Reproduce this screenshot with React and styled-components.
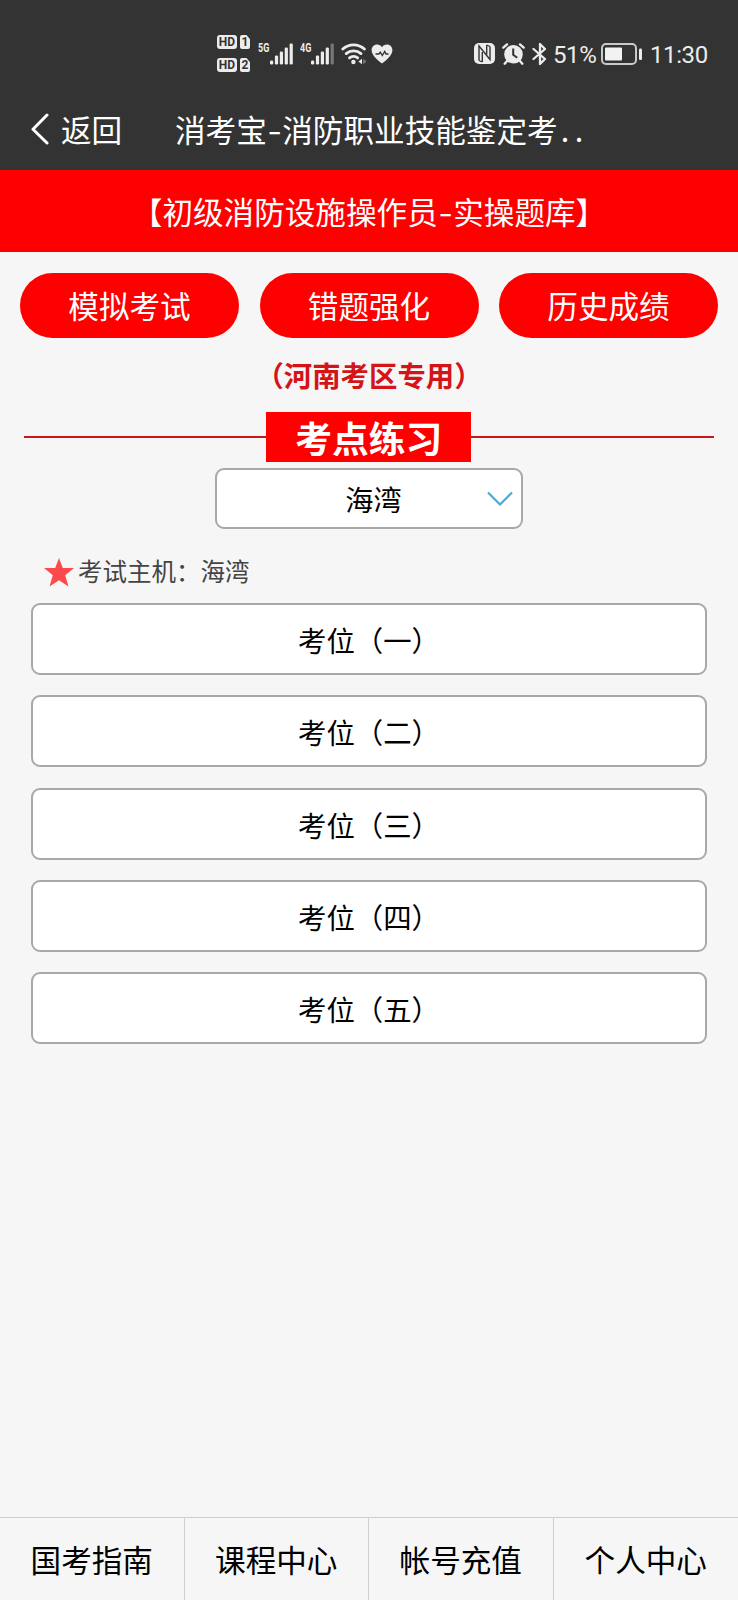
import React from "react";
import styled, { createGlobalStyle } from "styled-components";

const actions = ["模拟考试", "错题强化", "历史成绩"];
const seats = ["一", "二", "三", "四", "五"];
const tabs = ["国考指南", "课程中心", "帐号充值", "个人中心"];
const barHeights = [4, 9, 13, 17, 21];

function Signal({ label, weak }) {
    return (
        <SignalWrap>
            <NetLabel>{label}</NetLabel>
            <svg width="23" height="22" viewBox="0 0 23 22">
                {barHeights.map((h, i) => (
                    <rect
                        key={h}
                        x={i * 4.9}
                        y={21.5 - h}
                        width="3.2"
                        height={h}
                        rx="1.2"
                        fill={weak && i === 4 ? "#777" : "#ececec"}
                    />
                ))}
            </svg>
        </SignalWrap>
    );
}

function SimBadge({ num }) {
    return (
        <SimRow>
            <HdTag>HD</HdTag>
            <SimTag>{num}</SimTag>
        </SimRow>
    );
}

function WifiIcon() {
    return (
        <svg width="26" height="22" viewBox="0 0 26 22" fill="none" stroke="#ececec" strokeWidth="2.8" strokeLinecap="round">
            <path d="M1.8 6a16 16 0 0 1 21.6 0" />
            <path d="M5.2 10.6a11.2 11.2 0 0 1 14.8 0" />
            <path d="M8.5 14.9a6.4 6.4 0 0 1 8.2 0" />
            <circle cx="12.4" cy="19" r="2.2" fill="#ececec" stroke="none" />
            <path d="M21 15.8v5.4l-3.6-2.7z" fill="#ececec" stroke="none" />
            <path d="M22.2 15.8v5.4l3.4-2.7z" fill="#777" stroke="none" />
        </svg>
    );
}

function HeartIcon() {
    return (
        <svg width="22" height="20" viewBox="0 0 22 20">
            <path d="M11 19.5C8 17 .6 12 .6 6.3 .6 2.9 3 .6 6 .6c2.2 0 4 1 5 2.7C12 1.6 13.8 .6 16 .6c3 0 5.4 2.3 5.4 5.7C21.4 12 14 17 11 19.5z" fill="#ececec" />
            <path d="M4.5 10h3.3l1.5-1.8 2 3.3 2.4-4 1.3 2.5h2.5" fill="none" stroke="#333" strokeWidth="1.4" />
        </svg>
    );
}

function NfcIcon() {
    return (
        <svg width="21" height="21" viewBox="0 0 21 21">
            <rect width="21" height="21" rx="5" fill="#ececec" />
            <path d="M5 17.5V3l11 13.500V3.500" fill="none" stroke="#333" strokeWidth="1.4" />
            <path d="M8.3 9v10M12.700 2v9.500" fill="none" stroke="#333" strokeWidth="1.4" />
            <path d="M5 17.500l3.300 1.500M12.700 2L16 3.500" fill="none" stroke="#333" strokeWidth="1.2" />
        </svg>
    );
}

function AlarmIcon() {
    return (
        <svg width="23" height="22" viewBox="0 0 23 22">
            <circle cx="11.5" cy="11.3" r="9.3" fill="#ececec" />
            <path d="M1.3 4.6L5 1.4M21.7 4.6L18 1.4M5 18l-2.3 2.7M18 18l2.3 2.7" stroke="#ececec" strokeWidth="2.4" strokeLinecap="round" />
            <path d="M11.2 5.5v6.3l4 3" fill="none" stroke="#333" strokeWidth="2" />
        </svg>
    );
}

function BluetoothIcon() {
    return (
        <svg width="15" height="24" viewBox="0 0 15 24" fill="none" stroke="#ececec" strokeWidth="2.3" strokeLinejoin="round" strokeLinecap="round">
            <path d="M1.5 7L13 17l-5 5V2l5 5L1.5 17" />
        </svg>
    );
}

function BatteryIcon() {
    return (
        <svg width="41" height="22" viewBox="0 0 41 22">
            <rect x="1" y="1" width="34" height="20" rx="4" fill="none" stroke="#c9c9c9" strokeWidth="2" />
            <rect x="4" y="4.5" width="17" height="13" rx="1" fill="#f2f2f2" />
            <rect x="38" y="5.5" width="3" height="11.5" rx="1.2" fill="#ececec" />
        </svg>
    );
}

export default function App() {
    return (
        <Page>
            <GlobalStyle />

            <StatusBar>
                <StatusGroup>
                    <SimStack>
                        <SimBadge num="1" />
                        <SimBadge num="2" />
                    </SimStack>
                    <Signal label="5G" />
                    <Signal label="4G" weak />
                    <IconBox><WifiIcon /></IconBox>
                    <IconBox marginLeft="4px"><HeartIcon /></IconBox>
                </StatusGroup>
                <StatusGroup>
                    <IconBox><NfcIcon /></IconBox>
                    <IconBox marginLeft="7px"><AlarmIcon /></IconBox>
                    <IconBox marginLeft="7px"><BluetoothIcon /></IconBox>
                    <StatusText width="48px" marginLeft="6px">51%</StatusText>
                    <IconBox><BatteryIcon /></IconBox>
                    <StatusText width="59px" marginLeft="8px">11:30</StatusText>
                </StatusGroup>
            </StatusBar>

            <NavBar>
                <svg width="18" height="32" viewBox="0 0 18 32" fill="none" stroke="#fff" strokeWidth="3" strokeLinecap="round" strokeLinejoin="round">
                    <path d="M16 2L2 16.3 16 30" />
                </svg>
                <BackText>返回</BackText>
                <NavTitle>
                    消考宝<Hyphen>-</Hyphen>消防职业技能鉴定考<Dots>..</Dots>
                </NavTitle>
            </NavBar>

            <Banner>
                【初级消防设施操作员<Hyphen>-</Hyphen>实操题库】
            </Banner>

            <ActionRow>
                {actions.map((name) => (
                    <ActionButton key={name}>{name}</ActionButton>
                ))}
            </ActionRow>

            <AreaNote>（河南考区专用）</AreaNote>

            <SectionHead>
                <Line />
                <SectionTitle>考点练习</SectionTitle>
                <Line />
            </SectionHead>

            <HostSelect>
                <span>海湾</span>
                <svg width="26" height="16" viewBox="0 0 26 16" fill="none" stroke="#4ba9d2" strokeWidth="2.2">
                    <path d="M1 1.5l12 12 12-12" />
                </svg>
            </HostSelect>

            <HostInfo>
                <svg width="30" height="29" viewBox="0 0 30 29">
                    <path d="M15 0l3.8 10H30l-8.8 7.2L24.5 28.5 15 22.2 5.5 28.500 8.800 17.200 0 10h11.200z" fill="#fb4a4c" />
                </svg>
                <span>考试主机：海湾</span>
            </HostInfo>

            <SeatList>
                {seats.map((n) => (
                    <Seat key={n}>考位（{n}）</Seat>
                ))}
            </SeatList>

            <TabBar>
                {tabs.map((name) => (
                    <Tab key={name}>{name}</Tab>
                ))}
            </TabBar>
        </Page>
    );
}

const GlobalStyle = createGlobalStyle`
  body {
    margin: 0;
    background: #f6f6f7;
  }
  * {
    box-sizing: border-box;
  }
  svg {
    display: block;
    flex: none;
  }
`;

const Page = styled.div`
  display: flex;
  flex-direction: column;
  width: 738px;
  height: 1600px;
  overflow: hidden;
  background: #f6f6f7;
  font-family: "Noto Sans CJK SC", sans-serif;
  font-size: 30.6px;
  line-height: 1;
  white-space: nowrap;
`;

const StatusBar = styled.div`
  display: flex;
  justify-content: space-between;
  flex: none;
  height: 90px;
  padding: 17px 29px 0 217px;
  background: #333;
  color: #ececec;
`;

const StatusGroup = styled.div`
  display: flex;
  align-items: center;
  height: 73px;
`;

const SimStack = styled.div`
  display: flex;
  flex-direction: column;
  gap: 9px;
  width: 41px;
`;

const SimRow = styled.div`
  display: flex;
  gap: 3px;
`;

const HdTag = styled.div`
  width: 20px;
  height: 14px;
  border-radius: 3px;
  background: #ececec;
  color: #333;
  font: 700 12px/14px Roboto, sans-serif;
  text-align: center;
`;

const SimTag = styled(HdTag)`
  width: 10px;
  border-radius: 2px;
  clip-path: polygon(0 0, 65% 0, 100% 30%, 100% 100%, 0 100%);
`;

const SignalWrap = styled.div`
  display: flex;
  align-items: center;
  width: 41.5px;
`;

const NetLabel = styled.div`
  width: 11.5px;
  padding-bottom: 12px;
  font: 700 12.5px/12px Roboto, sans-serif;
  transform: scaleX(0.72);
  transform-origin: left;
`;

const IconBox = styled.div`
  margin-left: ${({ marginLeft }) => marginLeft || "0px"};
`;

const StatusText = styled.div`
  width: ${({ width }) => width};
  margin-left: ${({ marginLeft }) => marginLeft || "0px"};
  padding-top: 3px;
  font-family: Roboto, sans-serif;
  font-size: 24px;
  letter-spacing: -0.4px;
`;

const NavBar = styled.div`
  display: flex;
  align-items: center;
  flex: none;
  height: 80px;
  padding: 0 0 2px 31px;
  background: #333;
  color: #fff;
`;

const BackText = styled.div`
  width: 114px;
  margin-left: 12px;
`;

const NavTitle = styled.div`
  display: flex;
`;

const Hyphen = styled.span`
  display: inline-block;
  width: 15.5px;
  text-align: center;
  transform: scaleX(1.3);
`;

const Dots = styled.span`
  letter-spacing: 5.5px;
  margin-left: 3px;
`;

const Banner = styled.div`
  display: flex;
  align-items: center;
  justify-content: center;
  flex: none;
  height: 82px;
  background: #f00;
  color: #fff;
`;

const ActionRow = styled.div`
  display: grid;
  grid-template-columns: repeat(3, 1fr);
  gap: 20.5px;
  padding: 21px 20px 0;
`;

const ActionButton = styled.div`
  height: 65px;
  border-radius: 33px;
  background: #f00;
  color: #fff;
  line-height: 65px;
  text-align: center;
`;

const AreaNote = styled.div`
  margin-top: 23px;
  color: #d41417;
  font-size: 28.4px;
  font-weight: 700;
  text-align: center;
`;

const SectionHead = styled.div`
  display: flex;
  align-items: center;
  margin-top: 22.6px;
  padding: 0 24.5px 0 24px;
`;

const Line = styled.div`
  flex: 1;
  height: 2px;
  background: #c9181b;
`;

const SectionTitle = styled.div`
  width: 205px;
  height: 50px;
  background: #f00;
  color: #fff;
  font-size: 36.8px;
  font-weight: 700;
  line-height: 51px;
  text-align: center;
`;

const HostSelect = styled.div`
  display: grid;
  grid-template-columns: 35px 1fr 26px;
  align-items: center;
  width: 308px;
  height: 61px;
  margin: 6px auto 0;
  padding: 0 8px;
  border: 2px solid #a8a8a8;
  border-radius: 9px;
  background: #fff;
  color: #000;
  font-size: 28.2px;
  text-align: center;

  span {
    grid-column: 2;
    padding-top: 1px;
  }
`;

const HostInfo = styled.div`
  display: flex;
  align-items: center;
  gap: 4px;
  height: 30px;
  margin: 28px 0 0 44px;
  color: #444;
  font-size: 24.5px;

  span {
    padding-bottom: 1px;
  }
`;

const SeatList = styled.div`
  display: flex;
  flex-direction: column;
  gap: 20.3px;
  padding: 16px 31px 0;
`;

const Seat = styled.div`
  height: 72px;
  border: 2px solid #a8a8a8;
  border-radius: 9px;
  background: #fff;
  color: #000;
  font-size: 28.4px;
  line-height: 69px;
  text-align: center;
`;

const TabBar = styled.div`
  display: grid;
  grid-template-columns: repeat(4, 1fr);
  height: 83px;
  margin-top: auto;
  border-top: 1px solid #cfcfcf;
`;

const Tab = styled.div`
  padding-top: 26px;
  border-right: 1px solid #cfcfcf;
  color: #000;
  text-align: center;

  &:last-child {
    border-right: none;
  }
`;
